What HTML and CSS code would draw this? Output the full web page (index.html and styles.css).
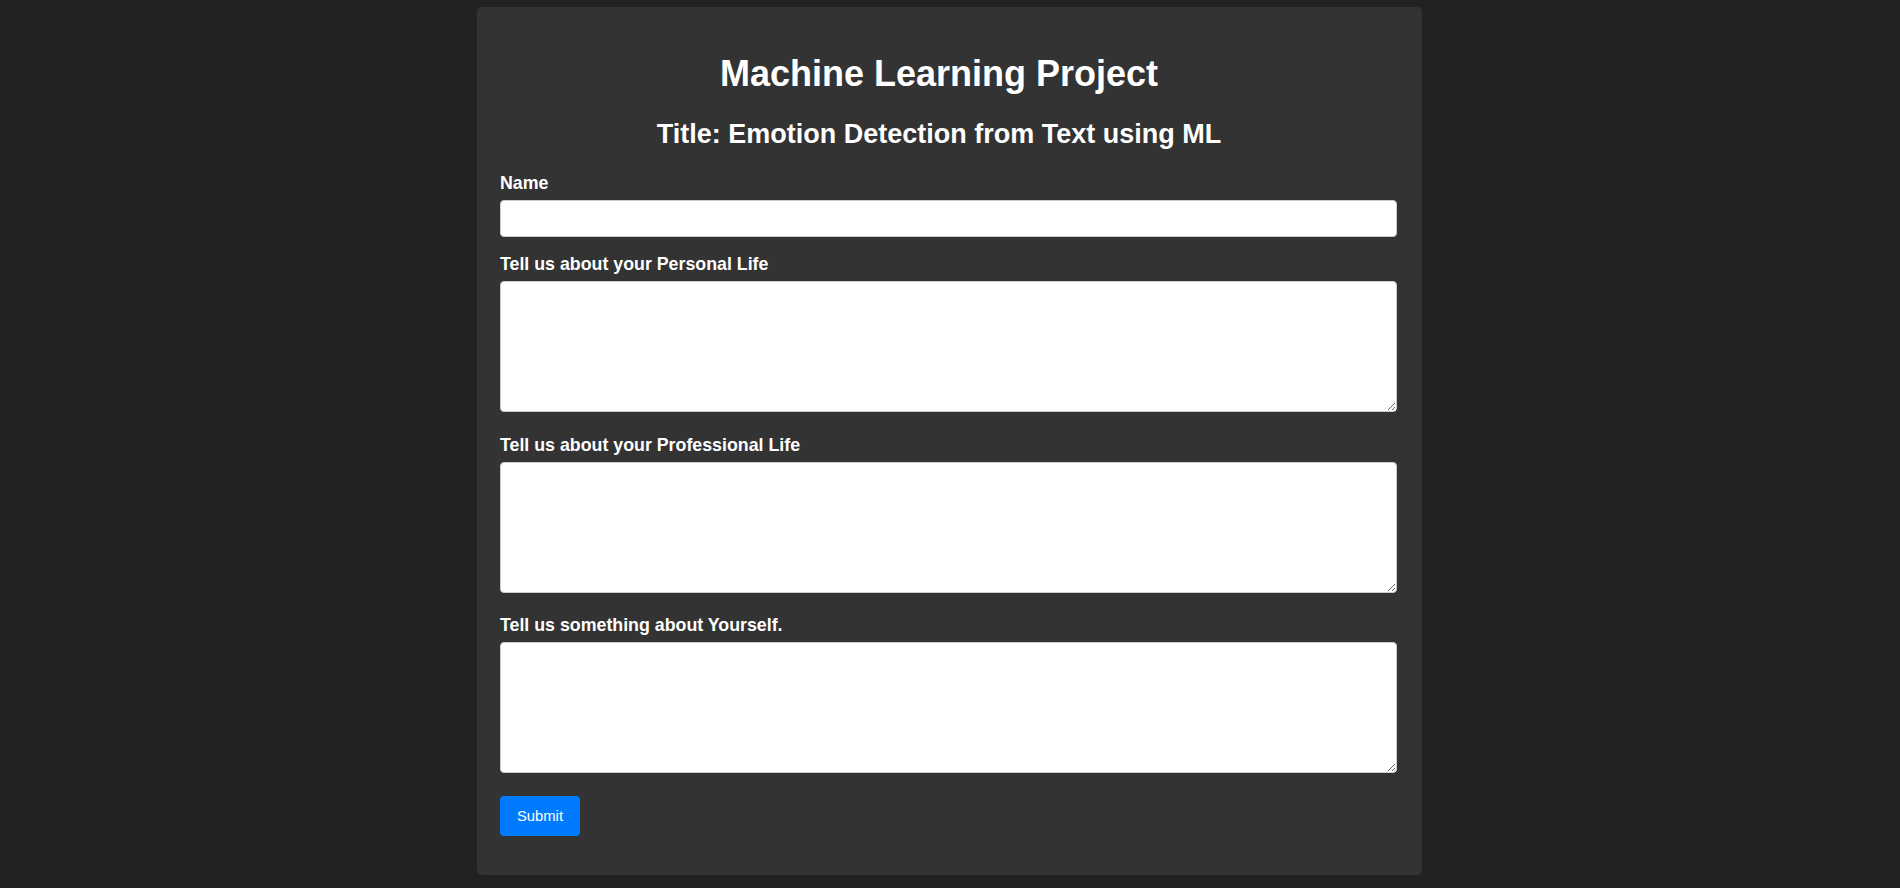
FILE: index.html
```html
<!DOCTYPE html>
<html lang="en">
<head>
<meta charset="utf-8">
<title>Machine Learning Project</title>
<link rel="stylesheet" href="styles.css">
</head>
<body>
<div class="container">
  <h1 class="title">Machine Learning Project</h1>
  <h2 class="subtitle">Title: Emotion Detection from Text using ML</h2>
  <form class="form">
    <label class="label label-first" for="name">Name</label>
    <input class="field" type="text" id="name" name="name">
    <label class="label" for="personal">Tell us about your Personal Life</label>
    <textarea class="area" id="personal" name="personal"></textarea>
    <label class="label label-after-area" for="professional">Tell us about your Professional Life</label>
    <textarea class="area" id="professional" name="professional"></textarea>
    <label class="label label-after-area" for="yourself">Tell us something about Yourself.</label>
    <textarea class="area" id="yourself" name="yourself"></textarea>
    <button class="submit" type="submit">Submit</button>
  </form>
</div>
</body>
</html>
```
FILE: styles.css
```css
html, body {
  margin: 0;
  padding: 0;
}
body {
  background: #222222;
  color: #ffffff;
  font-family: "Liberation Sans", Arial, sans-serif;
}
.container {
  width: 945px;
  box-sizing: border-box;
  margin: 7px 0 0 calc(50% - 473px);
  padding: 20px 25px 39px 23px;
  background: #333333;
  border-radius: 5px;
}
.title {
  margin: 26px 19px 0 0;
  font-size: 36px;
  line-height: 41px;
  font-weight: bold;
  text-align: center;
}
.subtitle {
  margin: 25px 19px 0 0;
  font-size: 27px;
  line-height: 31px;
  font-weight: bold;
  text-align: center;
}
.form {
  display: flex;
  flex-direction: column;
}
.label {
  display: block;
  font-size: 17.8px;
  line-height: 20px;
  font-weight: bold;
  margin: 17px 0 7px;
}
.label-first {
  margin-top: 23px;
}
.label-after-area {
  margin-top: 22.5px;
}
.field {
  display: block;
  width: 100%;
  height: 37px;
  box-sizing: border-box;
  margin: 0;
  border: 1px solid #cccccc;
  border-radius: 4px;
  background: #ffffff;
  font-family: "Liberation Sans", Arial, sans-serif;
  font-size: 16px;
  padding: 8px;
}
.area {
  display: block;
  width: 100%;
  height: 131px;
  box-sizing: border-box;
  margin: 0;
  border: 1px solid #cccccc;
  border-radius: 4px;
  background: #ffffff;
  font-family: "Liberation Sans", Arial, sans-serif;
  font-size: 16px;
  padding: 8px;
}
.submit {
  align-self: flex-start;
  margin-top: 23px;
  width: 80px;
  height: 40px;
  border: none;
  border-radius: 4px;
  background: #007bff;
  color: #ffffff;
  font-family: "Liberation Sans", Arial, sans-serif;
  font-size: 14.8px;
  padding: 0;
  cursor: pointer;
}
```
